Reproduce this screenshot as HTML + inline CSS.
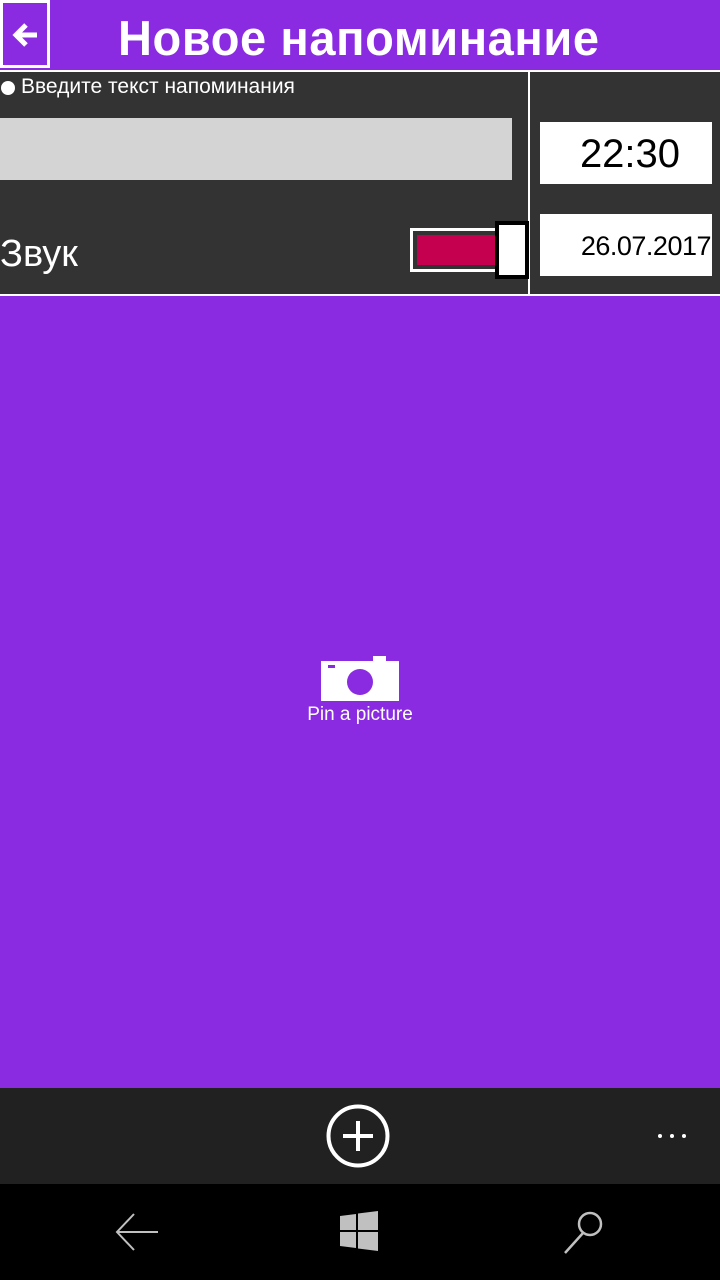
<!DOCTYPE html>
<html><head><meta charset="utf-8"><style>
*{margin:0;padding:0;box-sizing:border-box}
body{width:720px;height:1280px;background:#8a2be2;position:relative;overflow:hidden;font-family:"Liberation Sans","DejaVu Sans",sans-serif}
.a{position:absolute}
</style></head><body>
<div class="a" style="left:0;top:0;width:720px;height:70px;background:#8a2be2"></div>
<div class="a" style="left:0;top:0;width:50px;height:68px;border:3px solid #fff"></div>
<svg class="a" style="left:11px;top:20px" width="28" height="30" viewBox="0 0 28 30"><path d="M26 15H5M15 5L5 15l10 10" stroke="#fff" stroke-width="5" fill="none"/></svg>
<div class="a" style="left:118px;top:9px;font-size:47px;font-weight:bold;color:#fff;letter-spacing:0.6px;transform:scaleY(1.05);transform-origin:top left">Новое напоминание</div>
<div class="a" style="left:0;top:70px;width:720px;height:2px;background:#fff"></div>
<div class="a" style="left:0;top:72px;width:720px;height:222px;background:#333"></div>
<div class="a" style="left:528px;top:72px;width:2px;height:222px;background:#fff"></div>
<div class="a" style="left:0;top:294px;width:720px;height:2px;background:#fff"></div>
<div class="a" style="left:1px;top:81px;width:14px;height:14px;border-radius:50%;background:#fff"></div>
<div class="a" style="left:21px;top:75px;font-size:21px;color:#fff">Введите текст напоминания</div>
<div class="a" style="left:0;top:118px;width:512px;height:62px;background:#d4d4d4"></div>
<div class="a" style="left:540px;top:122px;width:172px;height:62px;background:#fff;color:#000;font-size:40px;text-align:center;line-height:64px;padding-left:8px">22:30</div>
<div class="a" style="left:540px;top:214px;width:172px;height:62px;background:#fff;color:#000;font-size:27px;text-align:right;line-height:64px;padding-right:1px;letter-spacing:-0.5px">26.07.2017</div>
<div class="a" style="left:0;top:233px;font-size:38px;color:#fff">Звук</div>
<div class="a" style="left:410px;top:228px;width:90px;height:44px;border:3px solid #fff;background:#333"></div>
<div class="a" style="left:417px;top:235px;width:80px;height:30px;background:#c4004f"></div>
<div class="a" style="left:495px;top:221px;width:34px;height:58px;border:4px solid #000;background:#fff"></div>
<svg class="a" style="left:320px;top:654px" width="80" height="50" viewBox="0 0 80 50"><rect x="53" y="2" width="13" height="6" fill="#fff"/><rect x="1" y="7" width="78" height="40" fill="#fff"/><rect x="8" y="11" width="7" height="3" fill="#8a2be2"/><circle cx="40" cy="28" r="13" fill="#8a2be2"/></svg>
<div class="a" style="left:260px;top:704px;width:200px;text-align:center;font-size:19px;color:#fff">Pin a picture</div>
<div class="a" style="left:0;top:1088px;width:720px;height:96px;background:#212121"></div>
<svg class="a" style="left:326px;top:1104px" width="64" height="64" viewBox="0 0 64 64"><circle cx="32" cy="32" r="29.5" stroke="#fff" stroke-width="4" fill="none"/><path d="M32 17v30M17 32h30" stroke="#fff" stroke-width="4"/></svg>
<div class="a" style="left:658px;top:1134px;width:4px;height:4px;border-radius:50%;background:#fff"></div>
<div class="a" style="left:670px;top:1134px;width:4px;height:4px;border-radius:50%;background:#fff"></div>
<div class="a" style="left:682px;top:1134px;width:4px;height:4px;border-radius:50%;background:#fff"></div>
<div class="a" style="left:0;top:1184px;width:720px;height:96px;background:#000"></div>
<svg class="a" style="left:114px;top:1212px" width="46" height="40" viewBox="0 0 46 40"><path d="M44 20H3M20 2L3 20l17 18" stroke="#c0c0c0" stroke-width="2" fill="none"/></svg>
<svg class="a" style="left:338px;top:1210px" width="42" height="42" viewBox="0 0 42 42"><path d="M2 6l16-2v16H2zM20 3.5L40 1v19H20zM2 22h16v16L2 36zM20 22h20v19l-20-2.5z" fill="#c0c0c0"/></svg>
<svg class="a" style="left:560px;top:1210px" width="48" height="48" viewBox="0 0 48 48"><circle cx="30" cy="14" r="11" stroke="#c0c0c0" stroke-width="2.5" fill="none"/><path d="M23 23L5 43" stroke="#c0c0c0" stroke-width="2.5"/></svg>
</body></html>
